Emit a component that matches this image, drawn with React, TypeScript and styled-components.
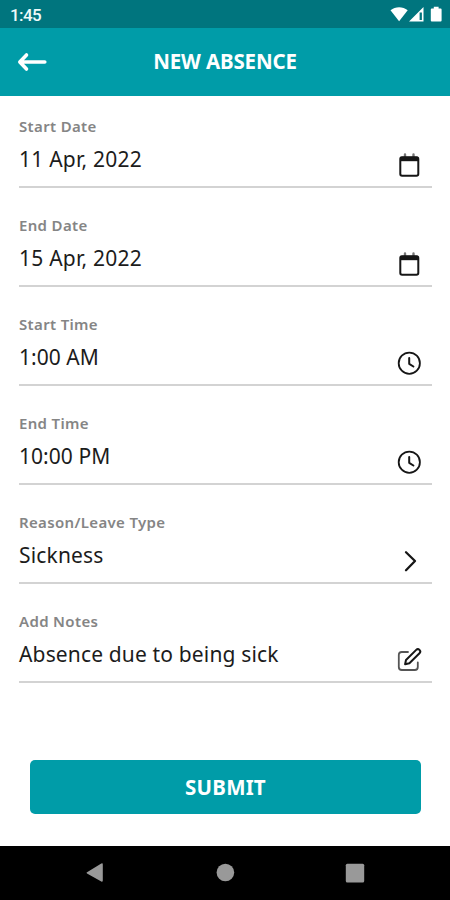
import React from "react";
import styled, { createGlobalStyle } from "styled-components";

const GlobalStyle = createGlobalStyle`
  * { box-sizing: border-box; }
  body { margin: 0; background: #fff; }
`;

const Screen = styled.div`
  width: 450px;
  height: 900px;
  display: flex;
  flex-direction: column;
  overflow: hidden;
  background: #fff;
  font-family: "Noto Sans", sans-serif;
`;

const StatusBar = styled.div`
  height: 28px;
  flex: none;
  display: flex;
  align-items: center;
  justify-content: space-between;
  padding: 1px 7px 0 10px;
  background: #00757e;
  color: #eefafa;
  font: 500 17px/28px Roboto, sans-serif;
  letter-spacing: -0.6px;
`;

const StatusIcons = styled.svg`
  display: block;
  width: 54px;
  height: 18px;
  margin-top: -2px;
`;

const Header = styled.header`
  height: 68px;
  flex: none;
  display: grid;
  grid-template-columns: 64px 1fr 64px;
  align-items: center;
  background: #009ca8;
`;

const BackButton = styled.button`
  height: 68px;
  padding: 0 0 0 17px;
  border: 0;
  background: none;
  display: flex;
  align-items: center;
`;

const Title = styled.h1`
  margin: 0 0 2px;
  text-align: center;
  color: #fff;
  font-size: 20.5px;
  line-height: 28px;
  font-weight: 700;
  letter-spacing: -0.15px;
`;

const Form = styled.main`
  flex: 1;
  display: flex;
  flex-direction: column;
  gap: 23px;
  padding: 16px 18px 0 19px;
`;

const FieldRow = styled.div`
  height: 76px;
  display: flex;
  justify-content: space-between;
  border-bottom: 2px solid #d3d3d3;
`;

const FieldText = styled.div`
  display: flex;
  flex-direction: column;
`;

const Label = styled.span`
  font-size: 15px;
  line-height: 28px;
  font-weight: 600;
  letter-spacing: 0.34px;
  color: #858585;
  white-space: nowrap;
`;

const Value = styled.span<{ $spacing: number }>`
  font-size: 21px;
  line-height: 38px;
  letter-spacing: ${(p) => p.$spacing}px;
  color: #1c1c1c;
  white-space: nowrap;
`;

const FieldIcon = styled.svg`
  flex: none;
  width: 28px;
  height: 28px;
  margin: 39px 9px 0 0;
  fill: none;
  stroke: #161616;
  stroke-width: 2;
  stroke-linecap: round;
  stroke-linejoin: round;
`;

const SubmitButton = styled.button`
  height: 54px;
  margin: 54px 11px 0 11px;
  padding: 0;
  border: 0;
  border-radius: 5px;
  background: #009ca8;
  color: #fff;
  font: 700 20.5px/54px "Noto Sans", sans-serif;
  letter-spacing: 0.2px;
`;

const NavBar = styled.nav`
  height: 54px;
  flex: none;
  display: flex;
  justify-content: space-between;
  align-items: center;
  padding: 0 81px;
  background: #000;
`;

const NavIcon = styled.svg`
  width: 28px;
  height: 28px;
  fill: #999;
`;

type IconName = "calendar" | "clock" | "chevron" | "edit";

const icons: Record<IconName, React.ReactNode> = {
  calendar: (
    <>
      <path d="M10 3.5v2.5M18.5 3.5v2.5" stroke="#777" strokeWidth="2.4" />
      <rect x="5.3" y="6.3" width="18" height="18.5" rx="1.8" />
      <path d="M5.5 8h17.6" strokeWidth="4.4" strokeLinecap="butt" />
    </>
  ),
  clock: (
    <>
      <circle cx="14.3" cy="14.2" r="10.6" strokeWidth="1.8" />
      <path d="M14.2 9v5.8l4.2 2.7" />
    </>
  ),
  chevron: <path d="M11 5.2l9 8.8-9 9.2" strokeWidth="2.3" />,
  edit: (
    <>
      <path
        d="M13 6H6.800a3 3 0 0 0-3 3v12a3 3 0 0 0 3 3h13a3 3 0 0 0 3-3v-4.500"
        stroke="#555"
        strokeWidth="1.8"
      />
      <path d="M11 14L21.2 3.900a2.3 2.3 0 0 1 3.3 3.3L14.4 17.2l-4.300 1z" />
    </>
  ),
};

const fields: { label: string; value: string; icon: IconName; spacing: number }[] = [
  { label: "Start Date", value: "11 Apr, 2022", icon: "calendar", spacing: 0.23 },
  { label: "End Date", value: "15 Apr, 2022", icon: "calendar", spacing: 0.23 },
  { label: "Start Time", value: "1:00 AM", icon: "clock", spacing: 0.05 },
  { label: "End Time", value: "10:00 PM", icon: "clock", spacing: 0.05 },
  { label: "Reason/Leave Type", value: "Sickness", icon: "chevron", spacing: 0.17 },
  { label: "Add Notes", value: "Absence due to being sick", icon: "edit", spacing: 0.15 },
];

export default function App() {
  return (
    <Screen>
      <GlobalStyle />
      <StatusBar>
        <span>1:45</span>
        <StatusIcons viewBox="0 0 54 18" fill="#fff">
          <path d="M1.5 5.2C6.5 1.2 13.7 1.2 18.7 5.2L10.1 16.2z" />
          <path d="M34.5 2v14.500H20zM30.600 7.500v7.400h2.300V7.500z" fillRule="evenodd" />
          <path d="M42.8 3.400h2V1.700h4.800v1.700h2q1 0 1 1v11.200q0 1-1 1h-8.800q-1 0-1-1V4.400q0-1 1-1z" />
        </StatusIcons>
      </StatusBar>
      <Header>
        <BackButton aria-label="Back">
          <svg
            width="30"
            height="22"
            viewBox="0 0 30 22"
            fill="none"
            stroke="#fff"
            strokeWidth="3.6"
            strokeLinecap="round"
            strokeLinejoin="round"
          >
            <path d="M27.800 11H3M9.500 4L2.800 11l6.700 7" />
          </svg>
        </BackButton>
        <Title>NEW ABSENCE</Title>
      </Header>
      <Form>
        {fields.map((f) => (
          <FieldRow key={f.label}>
            <FieldText>
              <Label>{f.label}</Label>
              <Value $spacing={f.spacing}>{f.value}</Value>
            </FieldText>
            <FieldIcon viewBox="0 0 28 28">{icons[f.icon]}</FieldIcon>
          </FieldRow>
        ))}
        <SubmitButton>SUBMIT</SubmitButton>
      </Form>
      <NavBar>
        <NavIcon viewBox="0 0 28 28">
          <path d="M6 13.2L20.3 4.6q1.5-.8 1.5.8v16.2q0 1.6-1.5.8L6 14.4q-1-.6 0-1.2z" />
        </NavIcon>
        <NavIcon viewBox="0 0 28 28">
          <circle cx="14.4" cy="13.5" r="8.8" />
        </NavIcon>
        <NavIcon viewBox="0 0 28 28">
          <rect x="4.8" y="4.8" width="18.4" height="18.6" rx="1.5" />
        </NavIcon>
      </NavBar>
    </Screen>
  );
}
